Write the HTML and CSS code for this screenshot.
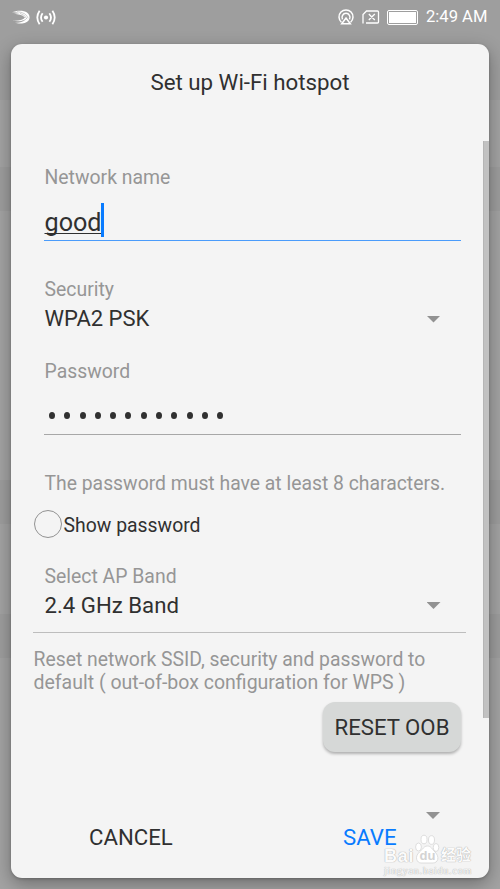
FILE: index.html
```
<!DOCTYPE html>
<html lang="en">
<head>
<meta charset="utf-8">
<title>Set up Wi-Fi hotspot</title>
<link rel="stylesheet" href="styles.css">
</head>
<body>
<header class="status">
  <svg class="swift" width="19" height="15" viewBox="0 0 19 15" fill="#fff">
    <path d="M0 2.300C5 0 12 .2 15 2.500C17.500 4.500 18 7 17.300 9C16.500 11.500 14 13.300 10 13.500C7 13.700 4.500 13.300 3 12.800C7 13 11 11.800 13.300 9.300C11 10.900 6 12.300 .8 10.600C6 11 11 10 13 7.500C10.500 4.500 5 3.800 2 3.900C4 3.200 6 3.100 7.500 3.200C5 2.300 2.500 2.200 0 2.300Z"/>
    <path d="M5 1.700Q14 2.200 16.200 8.300M8 3.300Q13.500 5 15 9.200M4 12.200Q12 12 14.500 8.500" fill="none" stroke="#9e9e9e" stroke-width=".5"/>
  </svg>
  <svg class="cast" width="20" height="15" viewBox="0 0 20 15" fill="none" stroke="#fff" stroke-width="1.800">
    <circle cx="10" cy="7.500" r="2.100" fill="#fff" stroke="none"/>
    <path d="M6.600 3.200Q3.400 7.500 6.600 11.800M13.400 3.200Q16.600 7.500 13.400 11.800M3.600 .8Q-1 7.500 3.600 14.200M16.400 .8Q21 7.500 16.400 14.200"/>
  </svg>
  <span class="spacer"></span>
  <svg class="airplay" width="16" height="16" viewBox="0 0 16 16" fill="none" stroke="#fff" stroke-width="1.500">
    <path d="M3.400 13.200A7 7 0 1 1 12.600 13.200M4.500 10.300A4 4 0 1 1 11.500 10.300M8 9L12.300 14.800H3.700Z"/>
  </svg>
  <svg class="sim" width="18" height="14" viewBox="0 0 18 14" fill="none" stroke="#fff" stroke-width="1.300">
    <path d="M1 13.500V4.500L4.500 1H15.500Q16.500 1 16.500 2V12Q16.500 13 15.500 13H4M6.800 4L12.800 10M12.800 4L6.800 10"/>
  </svg>
  <span class="battery"><i></i></span>
  <time class="clock">2:49 AM</time>
</header>
<main class="dialog">
  <h1 class="title">Set up Wi-Fi hotspot</h1>
  <section class="form">
    <label class="label name-label">Network name</label>
    <div class="field name-field"><span class="typed">good</span><i class="caret"></i></div>
    <label class="label security-label">Security</label>
    <div class="select"><span class="value security">WPA2 PSK</span><i class="arrow"></i></div>
    <label class="label password-label">Password</label>
    <div class="field password-field"><i></i><i></i><i></i><i></i><i></i><i></i><i></i><i></i><i></i><i></i><i></i><i></i></div>
    <p class="label hint">The password must have at least 8 characters.</p>
    <div class="check"><i class="circle"></i><span class="show">Show password</span></div>
    <label class="label band-label">Select AP Band</label>
    <div class="select"><span class="value band">2.4 GHz Band</span><i class="arrow"></i></div>
    <div class="rule"></div>
    <p class="reset-note"><span class="line-one">Reset network SSID, security and password to</span><br><span class="line-two">default ( out-of-box configuration for WPS )</span></p>
    <button class="reset">RESET OOB</button>
    <i class="arrow lower-arrow"></i>
  </section>
  <footer class="actions"><button class="cancel">CANCEL</button><button class="save">SAVE</button></footer>
  <i class="scrollbar"></i>
  <div class="watermark">
    <div class="brand"><span class="bai">Bai</span><svg class="paw" width="26" height="30" viewBox="0 0 24 30"><ellipse cx="3.500" cy="13" rx="2.900" ry="4"/><ellipse cx="9" cy="5.500" rx="3" ry="4.300"/><ellipse cx="16.500" cy="6" rx="3" ry="4.300"/><ellipse cx="21" cy="13.500" rx="2.800" ry="4"/><path d="M12.500 12C9 12 8 15 4.500 18C-1 23 2 29 6 29H18C23 29 25 23 20 18C17 15 16 12 12.500 12Z"/><text x="4.500" y="26">du</text></svg><span class="cn">经验</span></div>
    <div class="site">jingyan.baidu.com</div>
  </div>
</main>
</body>
</html>
```
FILE: styles.css
```
* { box-sizing: border-box; }
body {
  margin: 0;
  height: 889px;
  overflow: hidden;
  font-family: Roboto, sans-serif;
  color: #303030;
  background: linear-gradient(#9e9e9e 0 100px, #a3a3a3 100px 167px, #9d9d9d 167px 211px, #a3a3a3 211px 480px, #9d9d9d 480px 524px, #a3a3a3 524px 614px, #9d9d9d 614px 658px, #a3a3a3 658px);
}
h1, p { margin: 0; font-weight: 400; }
button { border: 0; padding: 0; background: none; font: inherit; color: inherit; }
i { display: block; }
.status { display: flex; align-items: center; height: 44px; padding: 0 13px 10px 12px; }
.swift { margin-right: 5px; }
.spacer { flex: 1; }
.airplay { margin-right: 8px; }
.sim { margin-right: 7px; }
.battery { width: 31px; height: 15px; padding: 1px; border: 1.5px solid #fff; border-radius: 2px; margin-right: 8px; }
.battery i { height: 100%; background: #fff; }
.clock { color: #fff; font-size: 16.600px; line-height: 20px; width: 61px; white-space: nowrap; }
.dialog {
  position: relative;
  width: 478px;
  height: 834px;
  margin: 0 11px;
  background: #f4f4f4;
  border-radius: 11px;
  box-shadow: 0 6px 18px rgba(0, 0, 0, .32), 0 1px 3px rgba(0, 0, 0, .2);
}
.title { padding-top: 23px; height: 97px; text-align: center; font-size: 22.300px; line-height: 30px; }
.form { height: 641px; padding: 25px 28px 0 33px; }
.label { display: block; padding-left: .5px; color: #969696; font-size: 19.400px; line-height: 24px; white-space: nowrap; }
.field { display: flex; border-bottom: 1px solid #a7a7a7; }
.name-field { height: 51px; border-color: #4b9cfb; align-items: flex-start; padding-top: 13px; }
.typed { width: 57px; padding: 4px 0 0 .5px; font-size: 25.200px; line-height: 32px; text-decoration: underline; text-decoration-thickness: 1px; text-underline-offset: 2px; text-decoration-skip-ink: none; }
.caret { width: 3px; height: 34px; background: #087bff; }
.security-label { margin-top: 37px; }
.select { display: flex; align-items: center; justify-content: space-between; height: 34px; padding-right: 20.500px; }
.value { padding-left: .5px; font-size: 22.200px; line-height: 30px; }
.security { font-size: 22px; }
.arrow { width: 14px; height: 7px; background: #929292; clip-path: polygon(0 0, 100% 0, 50% 100%); }
.password-label { margin-top: 24px; }
.password-field { height: 51px; padding: 28px 0 0 5px; gap: 9.300px; }
.password-field i { width: 6px; height: 7px; border-radius: 50%; background: #303030; }
.hint { margin-top: 37px; font-size: 19.350px; }
.check { display: flex; align-items: center; height: 30px; margin: 14px 0 0 -10px; }
.circle { width: 28px; height: 28px; margin: -2px 0 0; border: 1.500px solid #929292; border-radius: 50%; }
.show { font-size: 19.400px; margin-left: 1.500px; }
.band-label { margin-top: 25px; }
.band-label + .select { height: 33px; }
.band { margin-bottom: 2px; }
.rule { height: 1px; margin: 10px -5px 0 -11px; background: #bdbdbd; }
.reset-note { margin: 15px 0 0 -10.500px; color: #969696; font-size: 19.500px; line-height: 23px; white-space: nowrap; }
.line-one { font-size: 19.350px; }
.reset { display: block; width: 138px; height: 50px; margin: 8px 0 0 auto; border-radius: 12px; background: #d6d8d7; font-size: 22.200px; box-shadow: 0 2px 3px rgba(0, 0, 0, .28); }
.lower-arrow { margin: 60px 21px 0 auto; }
.actions { display: flex; justify-content: space-between; padding: 43px 92.500px 0 78px; font-size: 22.200px; line-height: 24px; }
.save { color: #087bff; }
.scrollbar { position: absolute; top: 97px; right: 0; width: 6px; height: 577px; background: #c1c1c1; border-left: 1px solid #b5b5b5; }
.watermark { position: absolute; left: 373px; top: 790px; color: #fbfbfb; font-family: "Liberation Sans", "Noto Sans CJK SC", sans-serif; text-shadow: 0 0 1px #aaa, 0 0 1px #bbb; }
.brand { display: flex; align-items: flex-end; height: 30px; font-weight: 700; }
.bai { font-size: 18px; line-height: 16px; width: 30px; letter-spacing: .8px; }
.paw { fill: #fff; stroke: #d6d6d6; stroke-width: .8; }
.paw text { font: bold 13px "Liberation Sans", sans-serif; fill: #d3d3d3; stroke: none; text-shadow: none; }
.cn { font-size: 15px; line-height: 18px; margin-left: 1px; }
.site { font: 10px/13px "Liberation Serif", serif; letter-spacing: .8px; white-space: nowrap; }
```
